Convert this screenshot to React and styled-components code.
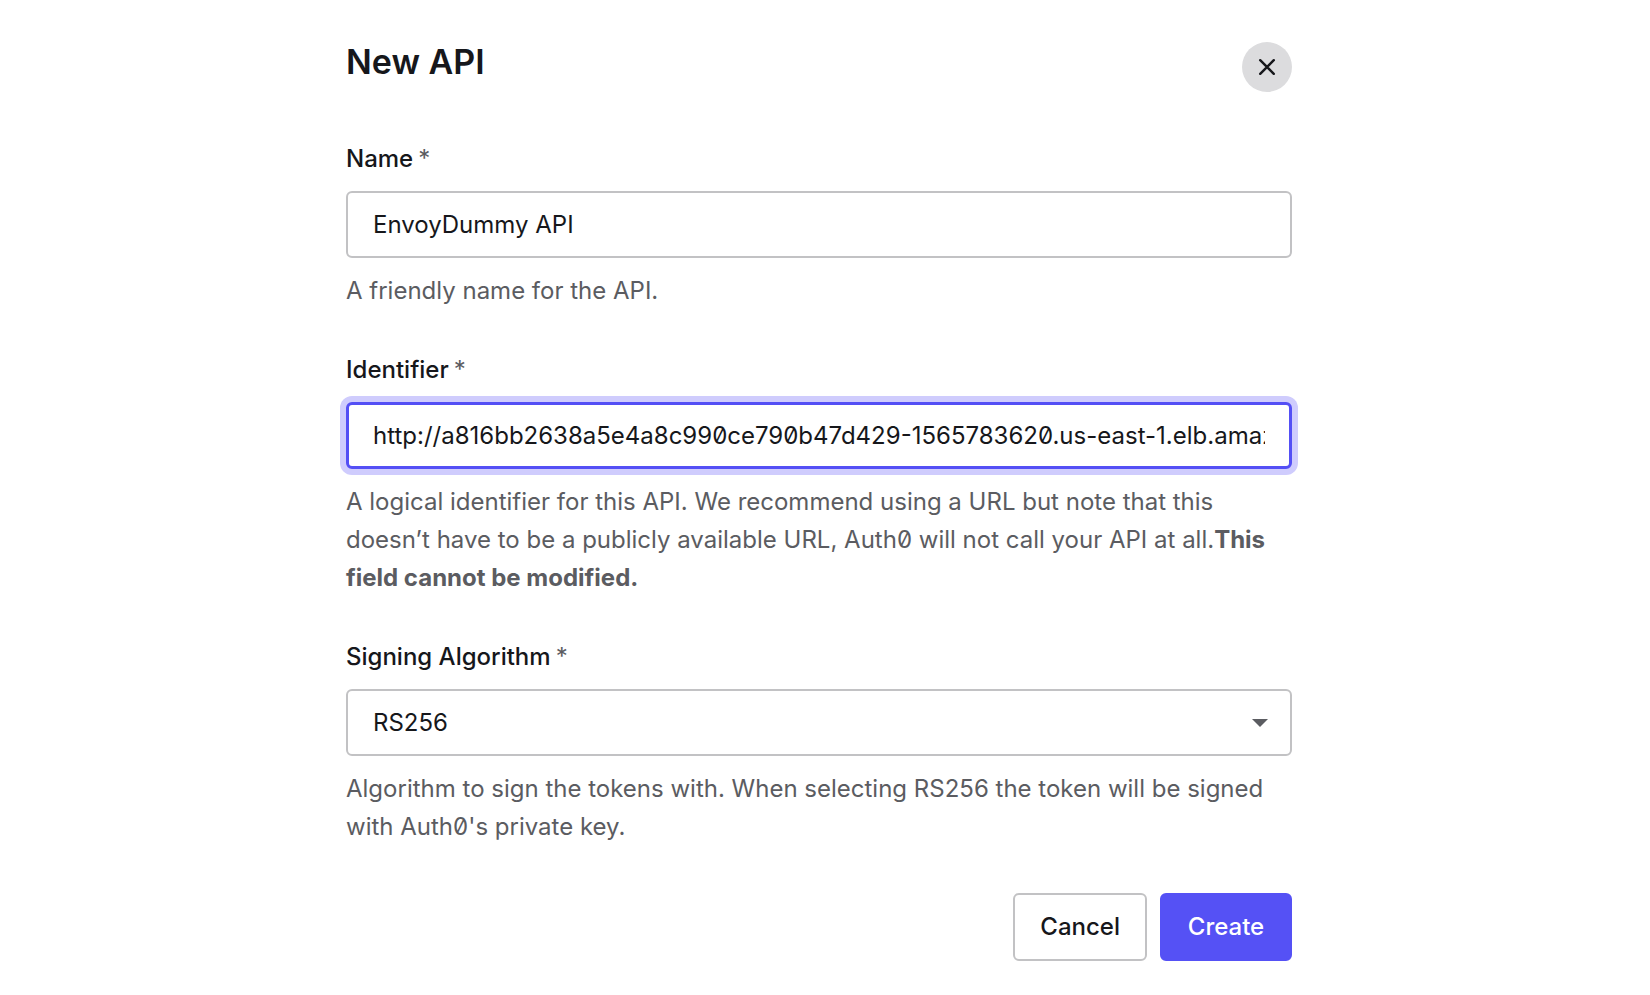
import React, { useState } from "react";
import styled, { createGlobalStyle, css } from "styled-components";

const GlobalStyle = createGlobalStyle`
  *, *::before, *::after { box-sizing: border-box; }
  body {
    margin: 0;
    background: #fff;
    color: #16171b;
    font-family: Inter, "Liberation Sans", sans-serif;
    font-size: 24px;
    line-height: 38px;
    font-feature-settings: "zero" 1;
    font-optical-sizing: none;
  }
`;

const Page = styled.main`
  padding: 42px 24px 32px 12px;
`;

const Dialog = styled.form`
  display: flex;
  flex-direction: column;
  width: 100%;
  max-width: 946px;
  margin: 0 auto;
`;

const Header = styled.header`
  display: flex;
  justify-content: space-between;
  align-items: flex-start;
  margin-bottom: 48px;
`;

const Title = styled.h1`
  margin: 0;
  font-size: 34px;
  line-height: 40px;
  font-weight: 600;
`;

const CloseButton = styled.button`
  display: grid;
  place-items: center;
  width: 50px;
  height: 50px;
  padding: 0;
  border: 0;
  border-radius: 50%;
  background: #dcdcde;
  color: #16171b;
  cursor: pointer;
`;

const Fields = styled.div`
  display: flex;
  flex-direction: column;
  gap: 41px;
`;

const FieldGroup = styled.div`
  display: flex;
  flex-direction: column;
`;

const Label = styled.label`
  margin-bottom: 13px;
  font-weight: 500;
`;

const Required = styled.span`
  margin-left: 5px;
  color: #5b5c61;
  font-weight: 400;
`;

const control = css`
  width: 100%;
  height: 67px;
  padding: 0 25px;
  border: 2px solid #c2c2c4;
  border-radius: 6px;
  background: #fff;
  color: inherit;
  font: inherit;
  font-feature-settings: inherit;
  font-optical-sizing: inherit;
  outline: 0;
`;

const TextInput = styled.input`
  ${control}
  ${(p) =>
    p.$active &&
    css`
      padding: 0 24px;
      border: 3px solid #544ff5;
      box-shadow: 0 0 0 6px #cfccfd;
    `}
`;

const SelectWrap = styled.div`
  display: grid;
  align-items: center;

  > * {
    grid-area: 1 / 1;
  }
`;

const Select = styled.select`
  ${control}
  appearance: none;
`;

const Caret = styled.svg`
  justify-self: end;
  margin-right: 24px;
  pointer-events: none;
`;

const Help = styled.p`
  margin: 14px 0 0;
  color: #5b5c61;
`;

const Actions = styled.footer`
  display: flex;
  justify-content: flex-end;
  gap: 13px;
  margin-top: 47px;
`;

const Button = styled.button`
  min-width: 132px;
  height: 68px;
  padding: 0 25px;
  border: 2px solid ${(p) => (p.$primary ? "#5551f5" : "#c2c2c4")};
  border-radius: 6px;
  background: ${(p) => (p.$primary ? "#5551f5" : "#fff")};
  color: ${(p) => (p.$primary ? "#fff" : "#16171b")};
  font: inherit;
  font-optical-sizing: inherit;
  font-weight: 500;
  cursor: pointer;
`;

function Field({ id, label, help, children }) {
  return (
    <FieldGroup>
      <Label htmlFor={id}>
        {label}
        <Required>*</Required>
      </Label>
      {children}
      <Help id={`${id}-help`}>{help}</Help>
    </FieldGroup>
  );
}

export default function App() {
  const [name, setName] = useState("EnvoyDummy API");
  const [identifier, setIdentifier] = useState(
    "http://a816bb2638a5e4a8c990ce790b47d429-1565783620.us-east-1.elb.amazonaws.com"
  );

  return (
    <>
      <GlobalStyle />
      <Page>
        <Dialog onSubmit={(e) => e.preventDefault()}>
          <Header>
            <Title>New API</Title>
            <CloseButton type="button" aria-label="Close">
              <svg width="18" height="18" viewBox="0 0 18 18" fill="none" stroke="currentColor" strokeWidth="2.4" strokeLinecap="round">
                <path d="M2.2 2.2 15.8 15.8M15.8 2.2 2.2 15.8" />
              </svg>
            </CloseButton>
          </Header>

          <Fields>
            <Field id="name" label="Name" help="A friendly name for the API.">
              <TextInput
                id="name"
                aria-describedby="name-help"
                value={name}
                onChange={(e) => setName(e.target.value)}
              />
            </Field>

            <Field
              id="identifier"
              label="Identifier"
              help={
                <>
                  A logical identifier for this API. We recommend using a URL but note that this
                  doesn’t have to be a publicly available URL, Auth0 will not call your API at
                  all.<strong>This field cannot be modified.</strong>
                </>
              }
            >
              <TextInput
                id="identifier"
                $active
                aria-describedby="identifier-help"
                value={identifier}
                onChange={(e) => setIdentifier(e.target.value)}
              />
            </Field>

            <Field
              id="algorithm"
              label="Signing Algorithm"
              help="Algorithm to sign the tokens with. When selecting RS256 the token will be signed with Auth0's private key."
            >
              <SelectWrap>
                <Select id="algorithm" aria-describedby="algorithm-help" defaultValue="RS256">
                  <option>RS256</option>
                  <option>HS256</option>
                </Select>
                <Caret width="16" height="8" viewBox="0 0 16 8" fill="#5b5c61" aria-hidden="true">
                  <path d="M0 0h16L8 8z" />
                </Caret>
              </SelectWrap>
            </Field>
          </Fields>

          <Actions>
            <Button type="button">Cancel</Button>
            <Button type="submit" $primary>
              Create
            </Button>
          </Actions>
        </Dialog>
      </Page>
    </>
  );
}
